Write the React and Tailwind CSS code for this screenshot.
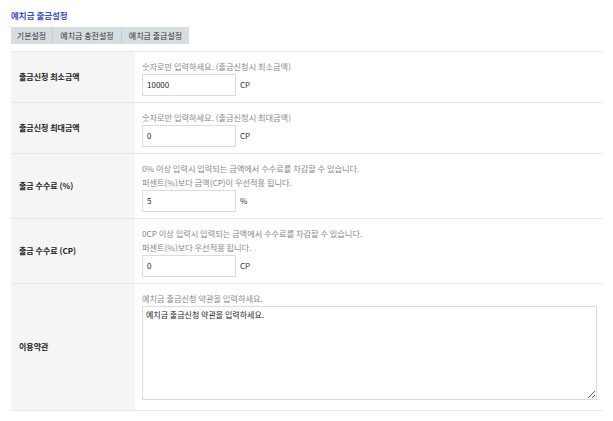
import React from "react";

const font = { fontFamily: '"Noto Sans CJK KR", "Noto Sans", sans-serif' };

function Row({ label, help = [], children }) {
  return (
    <div className="flex border-b border-[#e6e6e6]">
      <div className="w-[124px] shrink-0 bg-[#f5f5f5] flex items-center pl-[8px] text-[8px] font-bold text-[#222]">
        {label}
      </div>
      <div className="flex-1 pl-[7px] pr-[5px] pt-[7px] pb-[6px] bg-white">
        {help.map((h, i) => (
          <div key={i} className="h-[14px] leading-[14px] text-[8.2px] text-[#888]">
            {h}
          </div>
        ))}
        <div className="mt-[1px]">{children}</div>
      </div>
    </div>
  );
}

function NumInput({ value, unit }) {
  return (
    <div className="flex items-center">
      <div className="w-[94px] h-[22px] border border-[#dcdcdc] bg-white flex items-center pl-[4px] text-[8px] text-[#222]">
        {value}
      </div>
      <span className="ml-[4px] text-[8px] text-[#333]">{unit}</span>
    </div>
  );
}

export default function App() {
  return (
    <div className="w-[613px] h-[421px] bg-white px-[11px] pt-[8px]" style={font}>
      <div className="h-[14px] leading-[14px] text-[8.5px] font-bold text-[#3d4fc0]">예치금 출금설정</div>
      <div className="mt-[5px] flex">
        <div className="flex h-[17px] bg-[#d6dee1] text-[8px] text-[#333]">
          <div className="w-[42px] flex items-center justify-center border-r border-[#c4ced2]">기본설정</div>
          <div className="w-[69px] flex items-center justify-center border-r border-[#c4ced2]">예치금 충전설정</div>
          <div className="w-[67px] flex items-center justify-center">예치금 출금설정</div>
        </div>
      </div>
      <div className="mt-[7px] border-t border-[#e6e6e6]">
        <Row label="출금신청 최소금액" help={["숫자로만 입력하세요. (출금신청시 최소금액)"]}>
          <NumInput value="10000" unit="CP" />
        </Row>
        <Row label="출금신청 최대금액" help={["숫자로만 입력하세요. (출금신청시 최대금액)"]}>
          <NumInput value="0" unit="CP" />
        </Row>
        <Row
          label="출금 수수료 (%)"
          help={["0% 이상 입력시 입력되는 금액에서 수수료를 차감할 수 있습니다.", "퍼센트(%)보다 금액(CP)이 우선적용 됩니다."]}
        >
          <NumInput value="5" unit="%" />
        </Row>
        <Row
          label="출금 수수료 (CP)"
          help={["0CP 이상 입력시 입력되는 금액에서 수수료를 차감할 수 있습니다.", "퍼센트(%)보다 우선적용 됩니다."]}
        >
          <NumInput value="0" unit="CP" />
        </Row>
        <div className="flex border-b border-[#e6e6e6]">
          <div className="w-[124px] shrink-0 bg-[#f5f5f5] flex items-center pl-[8px] text-[8px] font-bold text-[#222]">
            이용약관
          </div>
          <div className="flex-1 pl-[7px] pr-[5px] pt-[7px] pb-[10px]">
            <div className="h-[14px] leading-[14px] text-[8.2px] text-[#888]">예치금 출금신청 약관을 입력하세요.</div>
            <textarea
              className="mt-[1px] block w-[455px] h-[94px] border border-[#dcdcdc] px-[3px] py-[2px] text-[8px] text-[#222] outline-none"
              style={font}
              defaultValue="예치금 출금신청 약관을 입력하세요."
            />
          </div>
        </div>
      </div>
    </div>
  );
}
